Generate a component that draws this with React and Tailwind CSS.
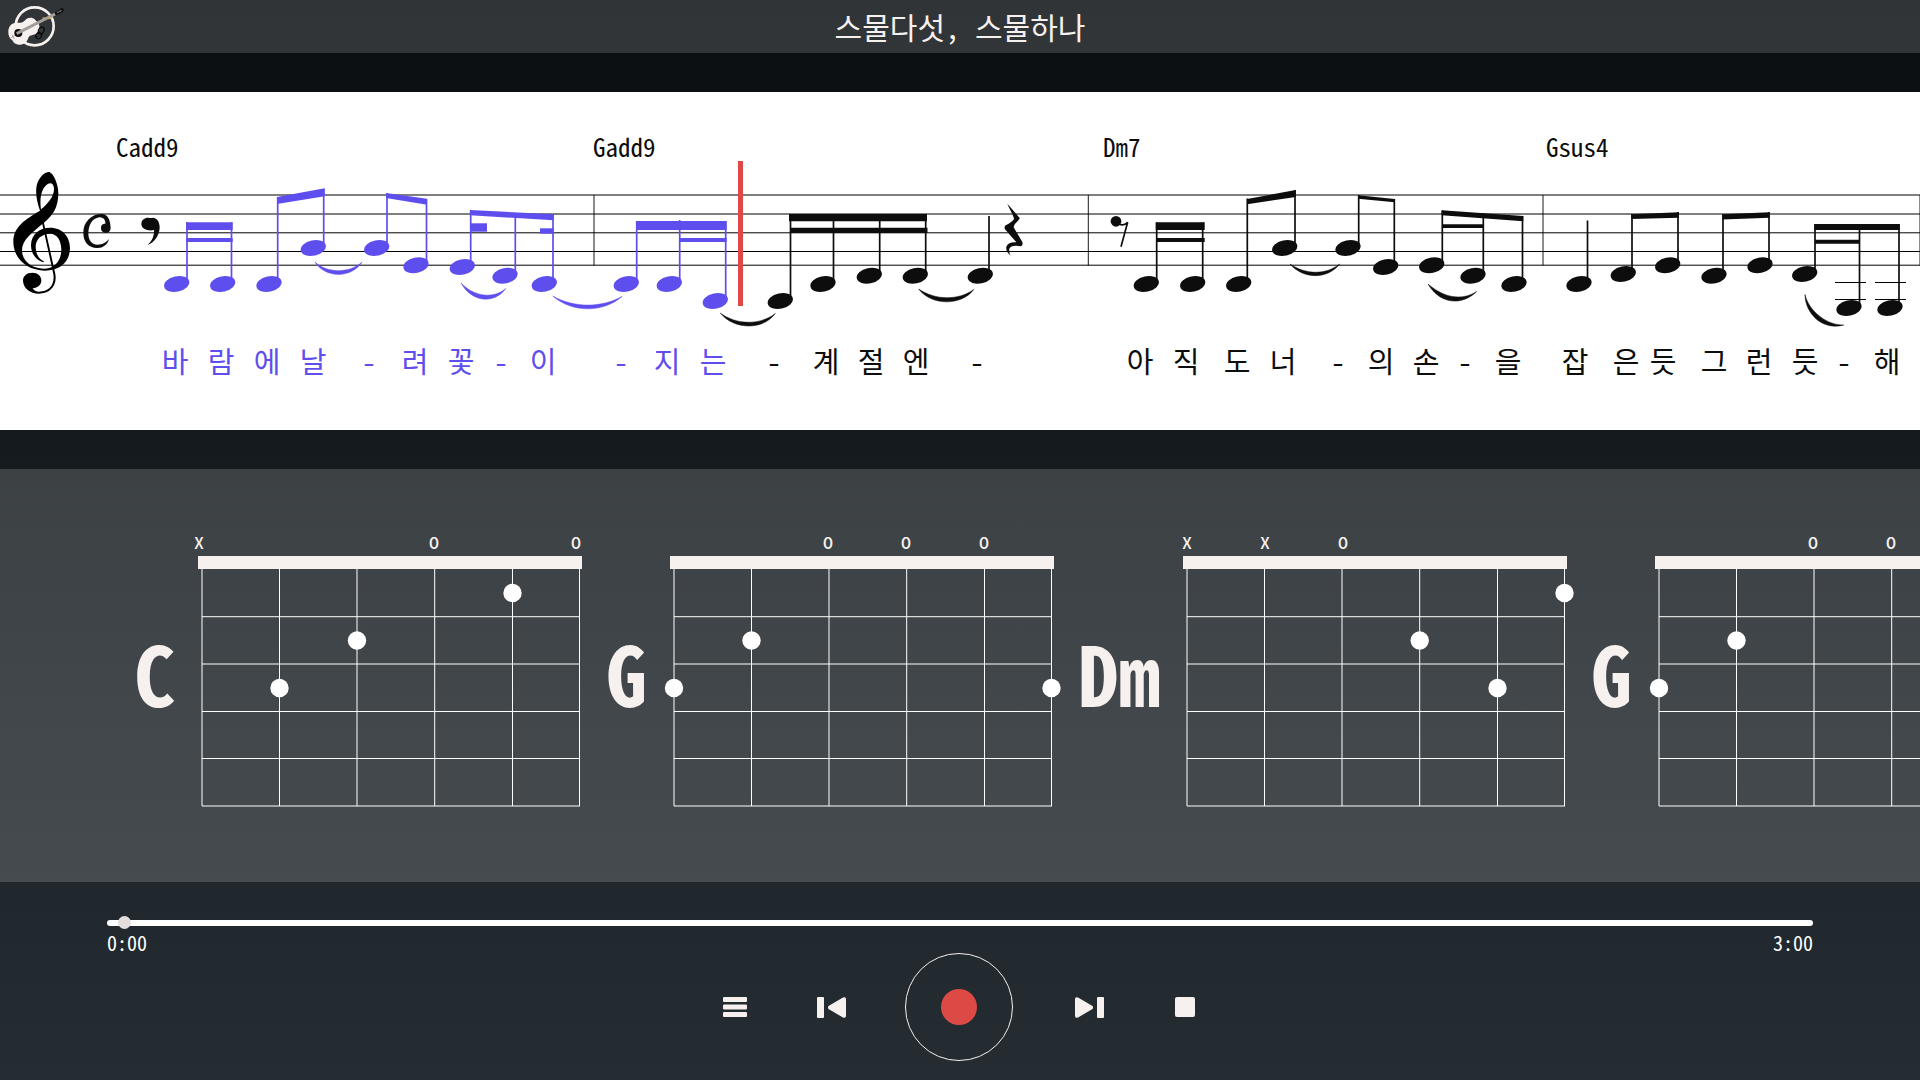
import React from "react";

const PURPLE = "#5f4eee";
const INK = "#0d0d0d";

const chordLabels = [
  { x: 116, text: "Cadd9" },
  { x: 593, text: "Gadd9" },
  { x: 1103, text: "Dm7" },
  { x: 1546, text: "Gsus4" },
];

const lyrics = [
  [175, "바", true], [221, "람", true], [267, "에", true], [313, "날", true], [369, "-", true],
  [415, "려", true], [461, "꽃", true], [501, "-", true], [543, "이", true], [621, "-", true],
  [667, "지", true], [713, "는", true], [774, "-"], [826, "계"], [871, "절"], [916, "엔"], [977, "-"],
  [1140, "아"], [1186, "직"], [1237, "도"], [1283, "너"], [1338, "-"], [1381, "의"], [1426, "손"],
  [1465, "-"], [1508, "을"], [1575, "잡"], [1626, "은"], [1663, "듯"], [1714, "그"], [1759, "런"],
  [1805, "듯"], [1844, "-"], [1887, "해"],
];

const playedHeads = [
  [176.7, 284], [222.7, 284], [269, 284], [313.3, 248], [376.7, 248], [416, 265.3],
  [462.3, 267], [505, 275.7], [544.3, 284], [626.3, 284], [669.3, 284], [715.3, 301],
];
const heads = [
  [780.3, 301], [823, 284], [869.3, 275.7], [915.3, 275.7], [980.3, 275.7], [1146.3, 284],
  [1192.7, 284], [1238.7, 284], [1284.7, 248], [1348, 248], [1385.7, 267], [1431.7, 265.3],
  [1473, 275.7], [1514, 284], [1579, 284], [1623.3, 274], [1667.7, 265.3], [1714, 275.7],
  [1760, 265.3], [1804.7, 274], [1849, 308], [1890, 308],
];
const playedStems = [
  [187, 222, 280], [231.5, 222, 280], [277.7, 197, 280], [323.7, 189, 245], [387, 193.5, 245],
  [426.5, 199, 262], [470.7, 210, 264], [515.3, 215, 272], [553, 214, 280], [636.7, 221, 281],
  [679.7, 220, 281], [725.7, 221, 298],
];
const stems = [
  [790.5, 214, 298], [833.5, 214, 282], [879.7, 214, 274], [925.7, 214, 274], [989, 216, 275],
  [1156.7, 222.5, 282], [1202.7, 222.5, 282], [1247.3, 198.5, 282], [1295, 190, 246],
  [1358.7, 195, 246], [1394.3, 199, 265], [1442.3, 210.5, 263], [1483.3, 213, 273],
  [1522.5, 216, 283], [1587.5, 220.5, 283], [1632, 214, 272], [1678, 212, 264], [1723, 214, 273],
  [1769, 212, 264], [1815, 224, 272], [1859.5, 224, 305], [1899, 224, 305],
];
const playedBeams = [
  "186,222.3 232.7,222.3 232.7,230 186,230",
  "186,238 232.7,238 232.7,242 186,242",
  "277,197 324.7,188.3 324.7,196.3 277,204",
  "386,193 427,198.7 427,204.7 386,198",
  "470,210 553.7,214.3 553.7,220.3 470,215.3",
  "470.7,223.3 487,223.3 487,231.7 470.7,231.7",
  "540,228.3 553.5,228.3 553.5,233.7 540,233.7",
  "636,221 726.7,221 726.7,230 636,230",
  "679.7,238 726.7,238 726.7,242 679.7,242",
];
const beams = [
  "789,214 927,214 927,221.3 789,221.3",
  "790,227.7 927.5,227.7 927.5,233 790,233",
  "1155.7,222.3 1204.7,222.3 1204.7,230 1155.7,230",
  "1156.7,238 1204.7,238 1204.7,242 1156.7,242",
  "1247,199 1295.7,190 1295.7,197 1247,204.3",
  "1358,195.3 1394.7,199 1394.7,202.3 1358,198.7",
  "1441.7,210.3 1523.3,216 1523.3,221.3 1441.7,215.3",
  "1442,224.3 1483.5,224.3 1483.5,228 1442,228",
  "1631.3,214.3 1679,212.3 1679,217.7 1631.3,219",
  "1722.3,214.3 1769.7,212.3 1769.7,217.7 1722.3,219.5",
  "1814.3,224 1899.7,224 1899.7,230 1814.3,230",
  "1815,239.7 1860,239.7 1860,243.7 1815,243.7",
];
const playedSlurs = [
  "M315 262 C325 278.5 352 278.5 362 262 C350 273.5 327 273.5 315 262Z",
  "M461 283 C472 303 495 304 505.7 288.5 C494 299 474 297 461 283Z",
  "M552.7 296 C572 313 603 313 622 296.5 C601 308 574 308 552.7 296Z",
];
const slurs = [
  "M720.3 313 C734 330 763 330.5 775.3 313.5 C760 325.5 736 325 720.3 313Z",
  "M918.7 289 C931 306 962 306 973.7 289.5 C959 300.5 935 300.5 918.7 289Z",
  "M1290 264 C1303 279.5 1328 279.5 1339.7 264 C1326 275 1306 275 1290 264Z",
  "M1428 284 C1440 304.5 1462 306 1476.7 291.5 C1462 301 1444 298 1428 284Z",
  "M1805 294.5 C1805 313 1822 331 1843.7 325 C1828 325.5 1809 312 1805 294.5Z",
];

function Notes({ color, heads, stems, beams, slurs }) {
  return (
    <g fill={color}>
      {heads.map(([x, y]) => (
        <ellipse key={`${x}-${y}`} cx={x} cy={y} rx="12.8" ry="7.7" transform={`rotate(-12 ${x} ${y})`} />
      ))}
      {stems.map(([x, y1, y2]) => (
        <line key={x} x1={x} x2={x} y1={y1} y2={y2} stroke={color} strokeWidth="1.7" />
      ))}
      {beams.map((p) => (
        <polygon key={p} points={p} />
      ))}
      {slurs.map((d) => (
        <path key={d} d={d} stroke={color} strokeWidth="0.5" />
      ))}
    </g>
  );
}

function Staff() {
  return (
    <svg className="block h-[338px] w-[1920px]" viewBox="0 92 1920 338" aria-label="악보" role="img">
      <g stroke="#000" strokeWidth="1">
        {[195, 214, 232.8, 251.5, 265.2].map((y) => (
          <line key={y} x1="0" x2="1920" y1={y} y2={y} />
        ))}
        {[594, 1088.3, 1543, 1920].map((x) => (
          <line key={x} x1={x} x2={x} y1="195" y2="265.5" strokeOpacity="0.9" />
        ))}
        <path d="M1835 282.5H1866M1835 299.5H1866M1875 282.5H1906M1875 299.5H1906" />
      </g>

      <g transform="translate(0 120) scale(0.33333)" fill="#000">
        <path
          fillRule="evenodd"
          d="M120 272C107 236 106 208 112 190C120 165 140 154 148 156C161 160 176 195 175 222C174 262 160 285 132 308C98 336 64 360 66 394C69 430 102 446 135 446C166 445 184 420 184 388C183 360 171 341 150 341C126 342 107 356 107 380C108 405 119 420 132 424L130 427C108 420 93 402 93 375C94 344 117 323 150 323C188 323 210 350 210 385C209 426 180 452 135 452C80 451 40 415 40 365C40 320 76 298 120 272ZM123 268C145 250 163 228 162 205C161 193 155 189 150 190C132 193 116 222 123 268Z"
        />
        <path d="M126 308L131 305L166 462C172 498 150 521 117 521C90 520 70 506 69 482C69 468 80 458 97 458C113 458 124 468 124 481C124 495 113 504 98 505C102 512 108 515 117 515C146 514 165 496 160 462Z" />
        <path
          fill={INK}
          d="M291 384C265 383 250 365 250 338C250 305 275 282 305 282C325 283 331 300 332 325C331 335 325 339 317 339A14 14 0 0 1 303 324C303 314 309 311 316 311C318 300 308 291 298 292C276 295 266 315 265 340C265 363 277 374 292 374C308 374 320 366 327 357C323 374 308 385 291 384Z"
        />
        <path
          fill={INK}
          d="M424 312C424 300 433 293 445 293C450 295 456 293 460 293C474 295 479 308 479 325C477 350 460 369 443 375C456 362 463 348 462 330C446 334 424 328 424 312Z"
        />
      </g>

      <g transform="translate(740 120) scale(0.33333)" fill={INK}>
        <path d="M802 251L839 294C841 299 821 310 821 322L847 366C849 372 847 377 842 379C825 375 811 378 808 386C807 394 808 400 812 407C803 400 797 391 799 380C803 369 816 365 829 367L795 328C793 324 793 319 797 316C806 311 820 303 822 296C820 285 808 267 802 251Z" />
        <circle cx="1128" cy="304" r="16" />
        <path d="M1138 313Q1153 318 1163 307L1143 380" fill="none" stroke={INK} strokeWidth="5" />
      </g>

      <Notes color={PURPLE} heads={playedHeads} stems={playedStems} beams={playedBeams} slurs={playedSlurs} />
      <Notes color={INK} heads={heads} stems={stems} beams={beams} slurs={slurs} />
      <rect x="738" y="161" width="5" height="145" fill="#e04848" />
    </svg>
  );
}

const chords = [
  { id: "c", name: "C", marks: [["x", 1], ["o", 236], ["o", 378]], dots: [[4, 1], [2, 2], [1, 3]] },
  { id: "g1", name: "G", marks: [["o", 158], ["o", 236], ["o", 314]], dots: [[1, 2], [0, 3], [5, 3]] },
  { id: "dm", name: "Dm", marks: [["x", 4], ["x", 82], ["o", 160]], dots: [[5, 1], [3, 2], [4, 3]] },
  { id: "g2", name: "G", marks: [["o", 158], ["o", 236], ["o", 314]], dots: [[1, 2], [0, 3], [5, 3]] },
];
const strings = [4, 81.5, 159, 236.7, 314.5, 381.5];
const frets = [60.7, 108, 155.5, 202.5, 250];

function Chord({ chord }) {
  return (
    <li className="flex shrink-0 items-center gap-[23px]">
      <h2 className="pb-5 text-[82px] leading-[112px] font-bold">{chord.name}</h2>
      <div className="relative">
        {chord.marks.map(([mark, x]) => (
          <span
            key={x}
            className="absolute -top-7 -translate-x-1/2 text-[21px] leading-6"
            style={{ left: x }}
          >
            {mark}
          </span>
        ))}
        <svg className="block h-[251px] w-[384px] overflow-visible" viewBox="0 0 384 251" aria-hidden="true">
          <g stroke="#fff" strokeWidth="1">
            {strings.map((x) => (
              <line key={x} x1={x} x2={x} y1="12" y2="250" />
            ))}
            {frets.map((y) => (
              <line key={y} x1="4" x2="382" y1={y} y2={y} />
            ))}
          </g>
          <rect width="384" height="13" fill="#f6f1ee" />
          {chord.dots.map(([s, f]) => (
            <circle key={s} cx={strings[s]} cy={f * 47.5 - 10.5} r="9.2" fill="#fff" />
          ))}
        </svg>
      </div>
    </li>
  );
}

function Logo() {
  return (
    <svg className="h-[53px] w-[70px]" viewBox="0 0 210 159" aria-hidden="true">
      <circle cx="104" cy="79" r="57" fill="none" stroke="#f6f1ee" strokeWidth="8" />
      <path
        d="M25 98C24 80 34 68 50 68C62 70 70 67 76 60C82 53 96 50 104 58C107 63 112 65 116 72C122 84 118 97 108 102C95 107 88 104 84 116C80 128 70 135 56 134C48 133 41 130 37 121C30 116 25 108 25 98Z"
        fill="#f6f1ee"
      />
      <circle cx="55" cy="99" r="12" fill="#090909" />
      <path d="M32 114L45 106M36 104L43 117" stroke="#8f8b89" strokeWidth="2" />
      <path d="M50 101L165 42" stroke="#a19e9c" strokeWidth="9" />
      <path d="M128 53L134 55M145 56L156 54" stroke="#e0ae52" strokeWidth="4" />
      <path d="M164 38L185 24Q192 24 191 32L187 38L168 46Z" fill="#0b0b0b" />
      <path d="M170 39L186 30M173 34L176 40M179 30L183 37" stroke="#8f8b89" strokeWidth="2" />
      <g fill="none" stroke="#0b0b0b" strokeWidth="4">
        <ellipse cx="124" cy="91" rx="8" ry="10" transform="rotate(30 124 91)" />
        <ellipse cx="116" cy="107" rx="8" ry="9" transform="rotate(30 116 107)" />
        <path d="M112 98L128 104" />
      </g>
    </svg>
  );
}

const controlClass = "flex h-10 w-10 items-center justify-center";

export default function App() {
  return (
    <div
      className="flex min-h-screen flex-col overflow-hidden bg-linear-to-b from-[#0a0e11] to-[#252d33] text-[#f6f1ee]"
      style={{ fontFamily: '"Noto Sans Mono CJK KR", "Noto Sans CJK KR", monospace' }}
    >
      <header className="grid h-[53px] grid-cols-[1fr_auto_1fr] items-center bg-white/16">
        <a href="#" aria-label="홈" className="justify-self-start">
          <Logo />
        </a>
        <h1 className="pb-0.5 text-[30px] leading-[40px]">스물다섯, 스물하나</h1>
      </header>

      <section className="relative mt-[39px] overflow-hidden bg-white text-[#0d0d0d]">
        <Staff />
        {chordLabels.map((c) => (
          <span key={c.x} className="absolute top-9 text-[25px] leading-9" style={{ left: c.x }}>
            {c.text}
          </span>
        ))}
        {lyrics.map(([x, text, played]) => (
          <span
            key={x}
            className={
              "absolute top-[248px] -translate-x-1/2 text-[29px] leading-10 " + (played ? "text-[#5f4eee]" : "")
            }
            style={{ left: x }}
          >
            {text}
          </span>
        ))}
      </section>

      <ul className="mt-[39px] flex gap-6 overflow-x-auto bg-white/17 pt-[87px] pb-[75px] pl-[134px] [scrollbar-width:none]">
        {chords.map((chord) => (
          <Chord key={chord.id} chord={chord} />
        ))}
      </ul>

      <footer className="flex flex-1 flex-col px-[107px] pt-[34px]">
        <input
          type="range"
          min="0"
          max="180"
          step="0.1"
          defaultValue="1.2"
          aria-label="재생 위치"
          className="block h-[14px] w-full appearance-none bg-transparent [&::-webkit-slider-runnable-track]:h-[6px] [&::-webkit-slider-runnable-track]:rounded-full [&::-webkit-slider-runnable-track]:bg-white [&::-webkit-slider-thumb]:-mt-1 [&::-webkit-slider-thumb]:size-[13px] [&::-webkit-slider-thumb]:appearance-none [&::-webkit-slider-thumb]:rounded-full [&::-webkit-slider-thumb]:bg-[#e3dedd]"
        />
        <div className="flex justify-between pt-[3px] text-[20px] leading-5 text-white">
          <span>0:00</span>
          <span>3:00</span>
        </div>
        <div className="flex items-center justify-center">
          <div className="flex gap-14 pr-[54px]">
            <button type="button" aria-label="메뉴" className={controlClass}>
              <svg width="24" height="20" viewBox="0 0 24 20" fill="currentColor">
                <rect width="24" height="5" rx="1" />
                <rect y="7.500" width="24" height="5" rx="1" />
                <rect y="15" width="24" height="5" rx="1" />
              </svg>
            </button>
            <button type="button" aria-label="이전" className={controlClass}>
              <svg width="29" height="21" viewBox="0 0 29 21" fill="currentColor">
                <rect width="7" height="21" rx="1" />
                <path d="M11.5 9Q10.500 10.500 11.500 12L26 20.500Q29 21.500 29 19V2Q29 -0.500 26 0.500Z" />
              </svg>
            </button>
          </div>
          <button
            type="button"
            aria-label="녹음"
            className="flex size-[108px] items-center justify-center rounded-full border border-[#f6f1ee]"
          >
            <span className="size-9 rounded-full bg-[#dd4a45]" />
          </button>
          <div className="flex gap-14 pl-14">
            <button type="button" aria-label="다음" className={controlClass}>
              <svg width="29" height="21" viewBox="0 0 29 21" fill="currentColor">
                <path d="M17.500 9Q18.500 10.500 17.500 12L3 20.500Q0 21.500 0 19V2Q0 -0.500 3 0.500Z" />
                <rect x="22" width="7" height="21" rx="1" />
              </svg>
            </button>
            <button type="button" aria-label="정지" className={controlClass}>
              <span className="size-5 rounded-xs bg-[#f6f1ee]" />
            </button>
          </div>
        </div>
      </footer>
    </div>
  );
}
